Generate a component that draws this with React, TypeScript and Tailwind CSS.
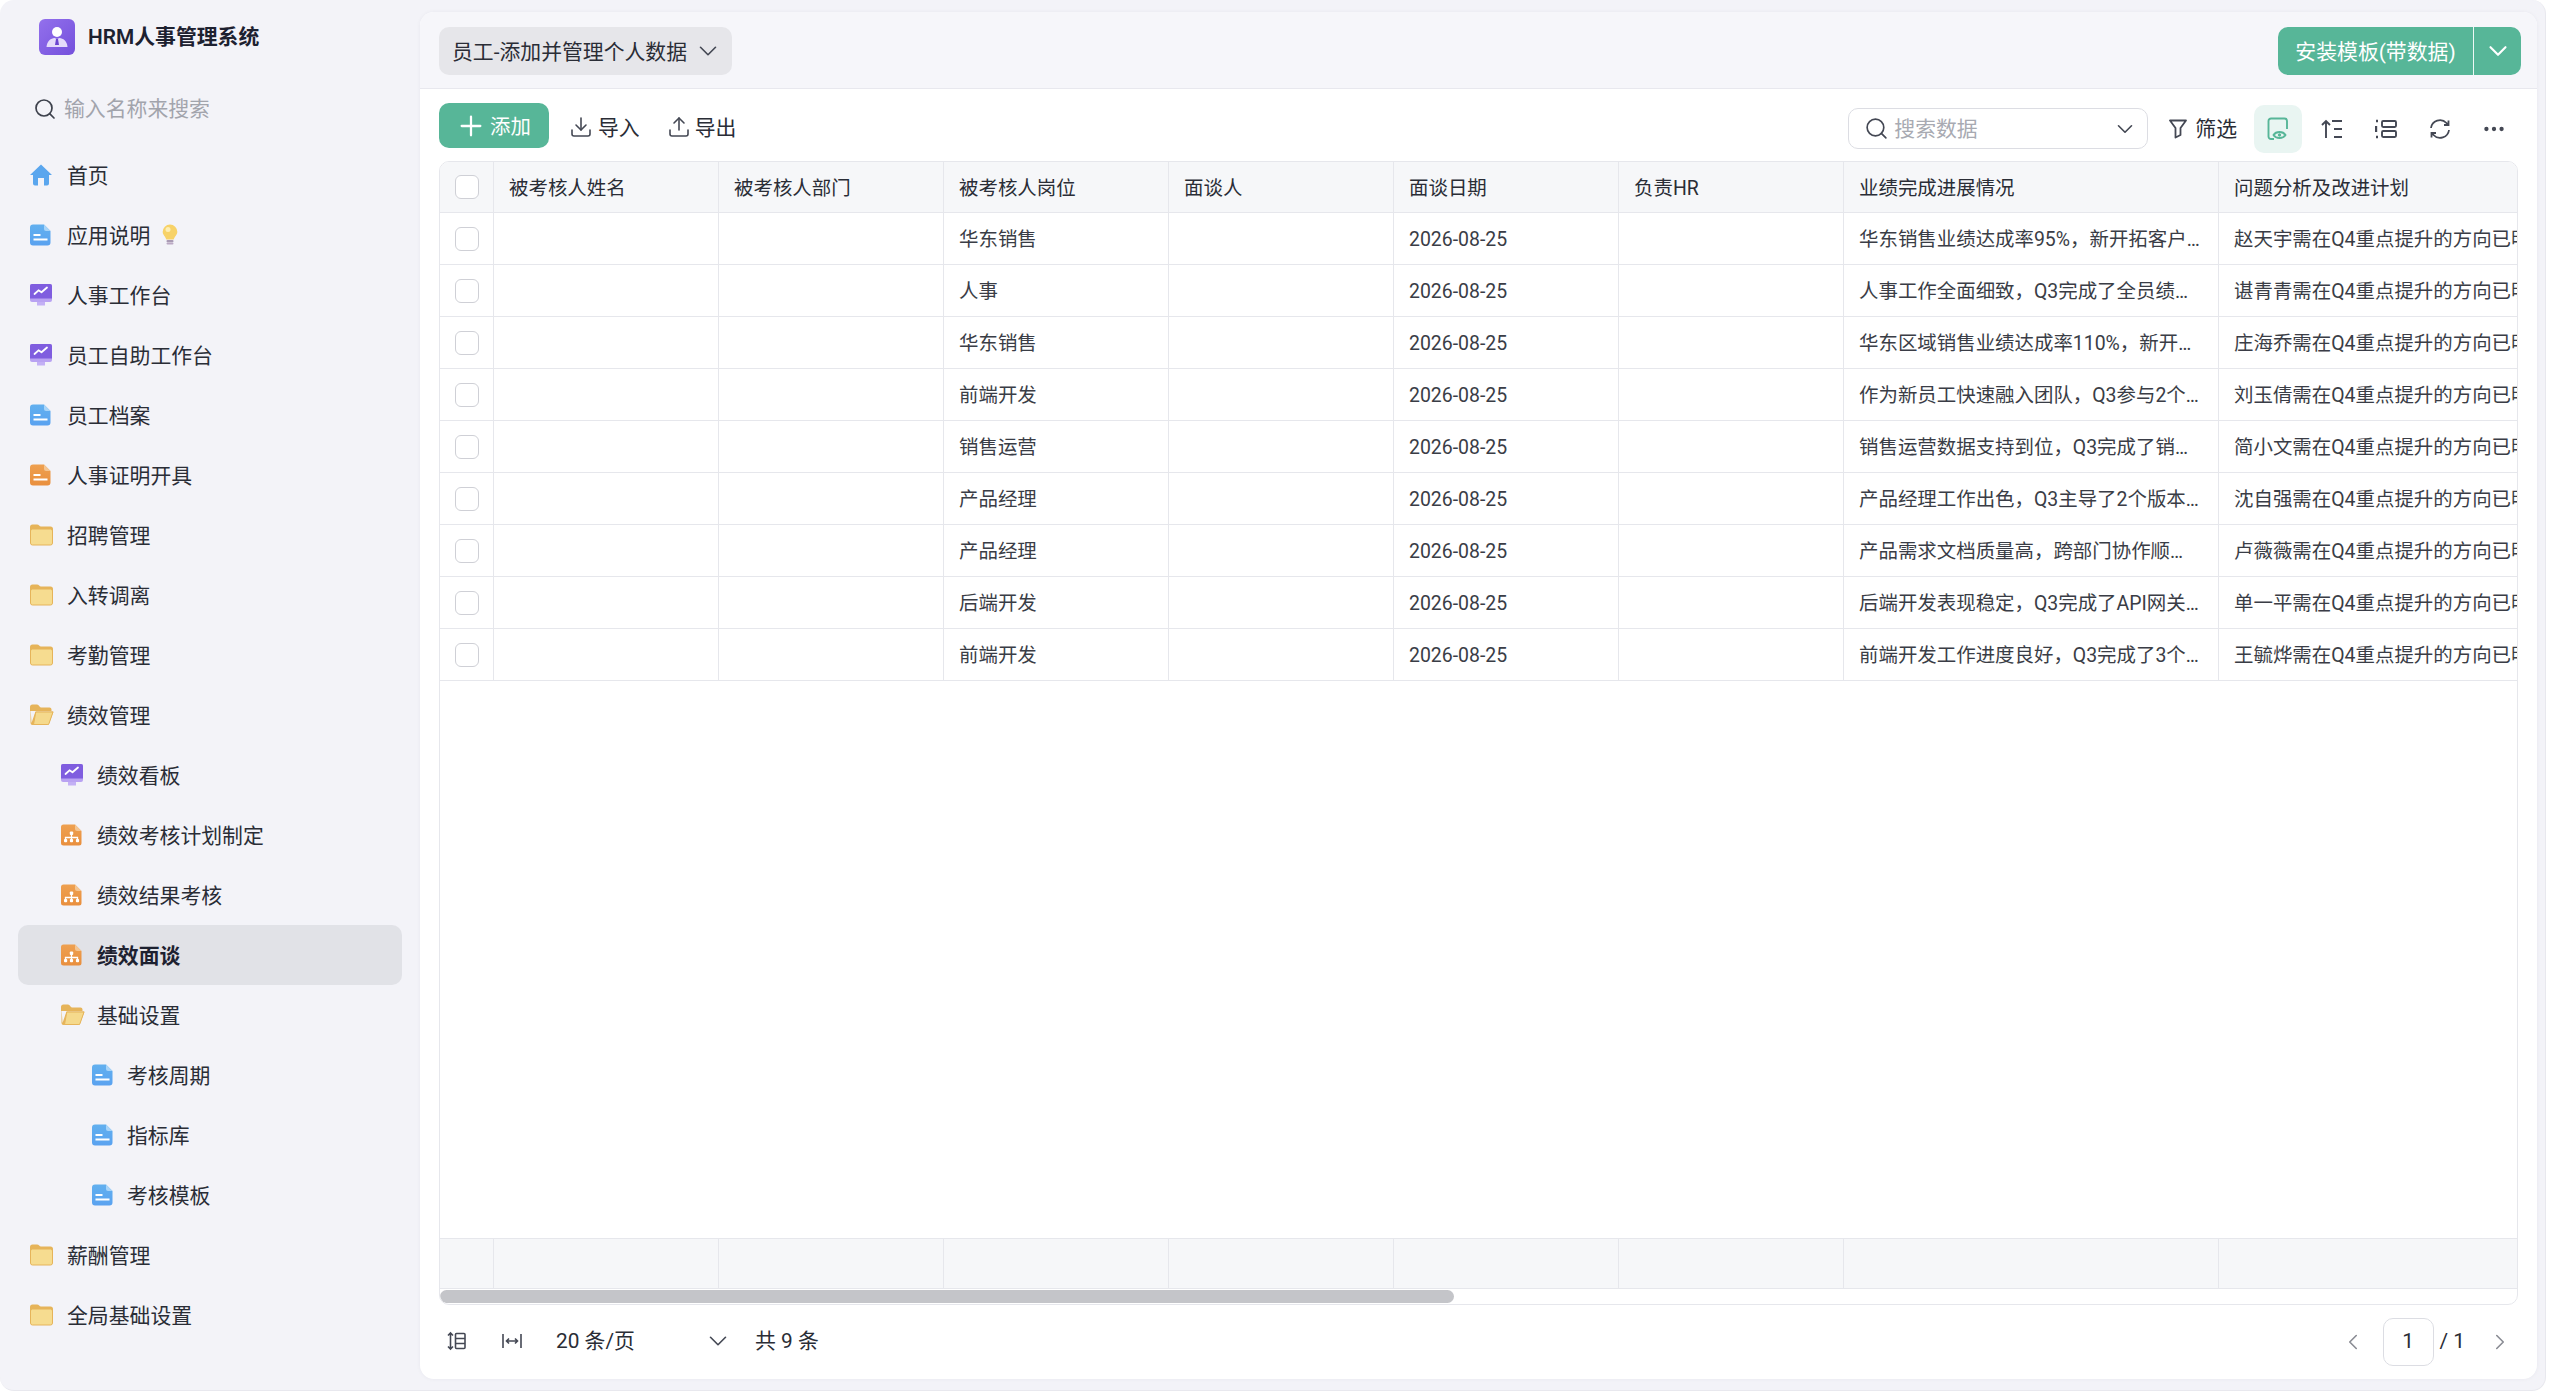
import React from "react";
import { ChevronDown, ChevronLeft, ChevronRight, Download, Ellipsis, Plus, Search, Upload } from "lucide-react";

const DocIcon = ({ orange = false }: { orange?: boolean }) => {
  const id = orange ? "docO" : "docB";
  return (
    <svg width="21" height="22" viewBox="0 0 21 22" className="shrink-0">
      <defs>
        <linearGradient id={id} x1="0" y1="0" x2="0" y2="1">
          <stop offset="0" stopColor={orange ? "#eea050" : "#62b0ef"} />
          <stop offset="1" stopColor={orange ? "#e98f3e" : "#5aa2f0"} />
        </linearGradient>
      </defs>
      <path d="M3 0.5H14L20.5 7V18.5A3 3 0 0 1 17.500 21.500H3A3 3 0 0 1 0 18.500V3.500A3 3 0 0 1 3 0.500Z" fill={`url(#${id})`} />
      <path d="M14 0.500L20.500 7H16A2 2 0 0 1 14 5Z" fill={orange ? "#f4c592" : "#a8d4f8"} />
      <rect x="3.500" y="10" width="7" height="2" fill="#fff" />
      <rect x="3.500" y="14.500" width="14" height="2" fill="#fff" />
    </svg>
  );
};

const OrgIcon = () => (
  <svg width="21" height="22" viewBox="0 0 21 22" className="shrink-0">
    <defs>
      <linearGradient id="orgO" x1="0" y1="0" x2="0" y2="1">
        <stop offset="0" stopColor="#eea050" />
        <stop offset="1" stopColor="#e98f3e" />
      </linearGradient>
    </defs>
    <path d="M2.500 0.500H14L20.500 7V19A2.500 2.500 0 0 1 18 21.500H2.500A2.500 2.500 0 0 1 0 19V3A2.500 2.500 0 0 1 2.500 0.500Z" fill="url(#orgO)" />
    <path d="M14 0.500L20.500 7H16A2 2 0 0 1 14 5Z" fill="#f4c592" />
    <path d="M10.500 10V13.500M4.500 16V13.500H16.500V16M10.500 13.500V16" stroke="#fff" strokeWidth="1.300" fill="none" />
    <rect x="8.800" y="7.500" width="3.400" height="3.400" rx="1" fill="#fff" />
    <rect x="3" y="15" width="3.200" height="3.200" rx="1" fill="#fff" />
    <rect x="8.900" y="15" width="3.200" height="3.200" rx="1" fill="#fff" />
    <rect x="14.900" y="15" width="3.200" height="3.200" rx="1" fill="#fff" />
  </svg>
);

const MonitorIcon = () => (
  <svg width="22" height="22" viewBox="0 0 22 22" className="shrink-0">
    <rect x="0" y="0" width="22" height="18" rx="2" fill="#b9a2f2" />
    <path d="M2 0H20A2 2 0 0 1 22 2V14.500H0V2A2 2 0 0 1 2 0Z" fill="#7f5ddf" />
    <rect x="7" y="18" width="8" height="3.500" fill="#c3b0f5" />
    <path d="M4.500 10L8.500 6.300L11.500 8.300L17 3.500" stroke="#fff" strokeWidth="1.800" fill="none" strokeLinecap="round" strokeLinejoin="round" />
  </svg>
);

const FolderIcon = ({ open = false }: { open?: boolean }) => (
  <svg width="24" height="22" viewBox="0 0 24 22" className="shrink-0">
    {open ? (
      <>
        <path d="M0 3A2.500 2.500 0 0 1 2.500 0.500H7C9 0.500 9.500 3.500 11 3.500H19.500A2 2 0 0 1 21.500 5.500V7H0Z" fill="#e6b45a" />
        <path d="M0.500 3V19A2 2 0 0 0 2.500 21H18.500L23.500 7.500H5.500L1.500 19" fill="#e6b45a" />
        <path d="M5.800 8H23L19 19.500A1.500 1.500 0 0 1 17.500 20.500H3.500Z" fill="#f5d98c" stroke="#e6b45a" strokeWidth="1" />
      </>
    ) : (
      <>
        <path d="M0 3A2.500 2.500 0 0 1 2.500 0.500H7C9 0.500 9.500 2.500 11 2.500H20.500A2.500 2.500 0 0 1 23 5V8H0Z" fill="#e6b45a" />
        <rect x="0.500" y="5" width="22" height="16" rx="2" fill="#f6dc90" stroke="#e6b45a" strokeWidth="1" />
      </>
    )}
  </svg>
);

const HomeIcon = () => (
  <svg width="22" height="22" viewBox="0 0 22 22" className="shrink-0">
    <path d="M11 0.500L22 11H19V19.500A2 2 0 0 1 17 21.500H14V14H8V21.500H5A2 2 0 0 1 3 19.500V11H0Z" fill="#5aa6ee" />
  </svg>
);

const Bulb = () => (
  <svg width="16" height="22" viewBox="0 0 16 22" className="ml-[12px]">
    <path d="M8 0.500A7.300 7.300 0 0 0 0.700 7.800C0.700 11 3.500 12.500 4.300 15.500H11.700C12.500 12.500 15.300 11 15.300 7.800A7.300 7.300 0 0 0 8 0.500Z" fill="#f7d268" />
    <circle cx="6" cy="5.500" r="2.500" fill="#fdeeb4" />
    <rect x="4.500" y="16" width="7" height="2.200" rx="1" fill="#a99ab4" />
    <rect x="4.500" y="18.500" width="7" height="2" rx="1" fill="#bba9c4" />
  </svg>
);

const items: { t: string; i: React.ReactNode; l?: number; bulb?: boolean; active?: boolean }[] = [
  { t: "首页", i: <HomeIcon /> },
  { t: "应用说明", i: <DocIcon />, bulb: true },
  { t: "人事工作台", i: <MonitorIcon /> },
  { t: "员工自助工作台", i: <MonitorIcon /> },
  { t: "员工档案", i: <DocIcon /> },
  { t: "人事证明开具", i: <DocIcon orange /> },
  { t: "招聘管理", i: <FolderIcon /> },
  { t: "入转调离", i: <FolderIcon /> },
  { t: "考勤管理", i: <FolderIcon /> },
  { t: "绩效管理", i: <FolderIcon open /> },
  { t: "绩效看板", i: <MonitorIcon />, l: 1 },
  { t: "绩效考核计划制定", i: <OrgIcon />, l: 1 },
  { t: "绩效结果考核", i: <OrgIcon />, l: 1 },
  { t: "绩效面谈", i: <OrgIcon />, l: 1, active: true },
  { t: "基础设置", i: <FolderIcon open />, l: 1 },
  { t: "考核周期", i: <DocIcon />, l: 2 },
  { t: "指标库", i: <DocIcon />, l: 2 },
  { t: "考核模板", i: <DocIcon />, l: 2 },
  { t: "薪酬管理", i: <FolderIcon /> },
  { t: "全局基础设置", i: <FolderIcon /> },
];

const rows = [
  ["华东销售", "华东销售业绩达成率95%，新开拓客户资源并持续跟进", "赵天宇"],
  ["人事", "人事工作全面细致，Q3完成了全员绩效考核组织工作", "谌青青"],
  ["华东销售", "华东区域销售业绩达成率110%，新开拓重点客户多家", "庄海乔"],
  ["前端开发", "作为新员工快速融入团队，Q3参与2个项目开发任务", "刘玉倩"],
  ["销售运营", "销售运营数据支持到位，Q3完成了销售数据分析工作", "简小文"],
  ["产品经理", "产品经理工作出色，Q3主导了2个版本迭代上线工作", "沈自强"],
  ["产品经理", "产品需求文档质量高，跨部门协作顺畅高效值得肯定", "卢薇薇"],
  ["后端开发", "后端开发表现稳定，Q3完成了API网关重构优化工作", "单一平"],
  ["前端开发", "前端开发工作进度良好，Q3完成了3个核心模块开发", "王毓烨"],
];

const Checkbox = () => <span className="block h-[24px] w-[24px] rounded-[6px] border border-[#cfd0d6] bg-white" />;

const cellBase = "h-full shrink-0 border-r border-[#e6e7ec] flex items-center";
const w1 = "w-[54px] justify-center";
const w2 = "w-[225px] pl-[15px] pr-[16px] pt-[3px]";
const w3 = "w-[375px] pl-[15px] pr-[16px] pt-[3px]";

const icon = "text-[#444854]";

export default function App() {
  return (
    <div className="h-[1391px] w-full overflow-hidden bg-white text-[19.46px] text-[#2a2d36]" style={{ fontFamily: 'Roboto, "Noto Sans CJK SC", sans-serif' }}>
      <div className="flex h-full w-[2546px] rounded-[14px] border-r border-b border-[#e8e8ee] bg-[#f3f3f8] pb-[11px] pr-[8px] pt-[12px]">
        <aside className="flex w-[420px] shrink-0 flex-col -mt-[12px]">
          <div className="flex h-[72px] items-center pl-[39px] pt-[1px]">
            <span className="flex h-[36px] w-[36px] items-center justify-center rounded-[6px] bg-gradient-to-br from-[#9370ec] to-[#7550dc]">
              <svg width="24" height="24" viewBox="0 0 24 24">
                <circle cx="12" cy="7" r="5" fill="#fff" />
                <path d="M1.500 22C2 15.500 6 13.500 9.500 13L12 14L14.500 13C18 13.500 22 15.500 22.500 22Z" fill="#e5dcfa" />
                <path d="M11 14H13L14 20H10Z" fill="#6a45cf" />
              </svg>
            </span>
            <span className="ml-[13px] pt-[3px] text-[20.85px] font-semibold text-[#1d2130]">HRM人事管理系统</span>
          </div>
          <div className="flex h-[73px] items-center pl-[33px]">
            <Search size={24} strokeWidth={1.7} className="text-[#3d414c]" />
            <span className="ml-[7px] pt-[2px] text-[20.85px] text-[#a2a4ac]">输入名称来搜索</span>
          </div>
          <nav className="flex flex-col">
            {items.map((it) => (
              <div key={it.t} className={`mx-[18px] flex h-[60px] items-center rounded-[10px] text-[20.85px] ${it.active ? "bg-[#e1e2e7] font-bold text-[#1d2130]" : ""}`}>
                <span className={`flex items-center ${it.l === 2 ? "ml-[74px] w-[35px]" : it.l === 1 ? "ml-[43px] w-[36px]" : "ml-[12px] w-[37px]"}`}>{it.i}</span>
                <span className="pt-[3px]">{it.t}</span>
                {it.bulb && <Bulb />}
              </div>
            ))}
          </nav>
        </aside>

        <main className="flex min-w-0 flex-1 flex-col overflow-hidden rounded-[14px] bg-white shadow-[0_0_4px_rgba(40,40,80,0.05)]">
          <header className="flex h-[77px] shrink-0 items-center justify-between border-b border-[#e8e8ee] bg-[#f6f6fa] pl-[19px] pr-[16px] pt-[2px]">
            <div className="flex h-[48px] w-[293px] items-center rounded-[10px] bg-[#e6e6ea] pl-[13px] text-[20.85px]">
              <span className="pt-[3px]">员工-添加并管理个人数据</span>
              <ChevronDown size={30} strokeWidth={1.3} className="ml-[6px] text-[#444854]" />
            </div>
            <div className="flex h-[48px] w-[243px] items-center rounded-[10px] bg-[#57b698] text-[20.85px] text-white">
              <span className="flex h-full w-[196px] items-center justify-center border-r border-white/90 pt-[3px]">安装模板(带数据)</span>
              <span className="flex flex-1 items-center justify-center">
                <ChevronDown size={30} strokeWidth={1.7} />
              </span>
            </div>
          </header>

          <div className="flex min-h-0 flex-1 flex-col px-[19px]">
            <div className="flex h-[72px] shrink-0 items-start justify-between">
              <div className="flex items-center pt-[14px]">
                <div className="flex h-[45px] w-[110px] items-center justify-center rounded-[10px] bg-[#57b698] text-[20.4px] text-white">
                  <Plus size={32} strokeWidth={1.7} className="-ml-[2px] mr-[3px]" />
                  <span className="pt-[3px]">添加</span>
                </div>
                <div className="ml-[20px] flex items-center pt-[4px] text-[20.85px]">
                  <Download size={24} strokeWidth={1.6} className={icon} />
                  <span className="ml-[5px] pt-[3px]">导入</span>
                </div>
                <div className="ml-[27px] flex items-center pt-[4px] text-[20.85px]">
                  <Upload size={24} strokeWidth={1.6} className={icon} />
                  <span className="ml-[4px] pt-[3px]">导出</span>
                </div>
              </div>
              <div className="flex items-center pr-[11px] pt-[19px]">
                <div className="flex h-[41px] w-[300px] items-center rounded-[10px] border border-[#dcdde3] pl-[15px] pr-[9px]">
                  <Search size={25} strokeWidth={1.6} className="text-[#444854]" />
                  <span className="ml-[5px] flex-1 pt-[3px] text-[20.85px] text-[#a8aab2]">搜索数据</span>
                  <ChevronDown size={26} strokeWidth={1.5} className="text-[#444854]" />
                </div>
                <svg width="18" height="20" viewBox="0 0 18 20" fill="none" stroke="#444854" strokeWidth="1.800" strokeLinejoin="round" className="ml-[21px]">
                  <path d="M1 1.500H17L11.500 9V16L6.500 18.500V9Z" />
                </svg>
                <span className="ml-[8px] pt-[3px] text-[20.85px]">筛选</span>
                <div className="-my-[4px] ml-[17px] flex h-[48px] w-[48px] items-center justify-center rounded-[10px] bg-[#e9f5f2]">
                  <svg width="22" height="24" viewBox="0 0 22 24" fill="none" stroke="#57b698" strokeWidth="1.900">
                    <path d="M7 22H4A2.500 2.500 0 0 1 1.500 19.500V4A2.500 2.500 0 0 1 4 1.500H17.500A2.500 2.500 0 0 1 20 4V12" />
                    <path d="M6.500 18C9 14 16 14 18.500 18C16 22 9 22 6.500 18Z" fill="#e9f5f2" />
                    <circle cx="12.500" cy="18" r="1.200" fill="#57b698" strokeWidth="1" />
                  </svg>
                </div>
                <svg width="22" height="22" viewBox="0 0 22 22" fill="none" stroke="#444854" strokeWidth="1.900" className="ml-[19px]">
                  <path d="M5 20V3M1 7L5 3L9 7M11 3H21M13 11H21M13 19H21" />
                </svg>
                <svg width="22" height="22" viewBox="0 0 22 22" fill="none" stroke="#444854" strokeWidth="1.900" className="ml-[32px]">
                  <rect x="7" y="3" width="14" height="6" rx="1.200" />
                  <rect x="7" y="13" width="14" height="6" rx="1.200" />
                  <path d="M1 3H3M1 8V14M1 19H3" strokeWidth="2.400" />
                </svg>
                <svg width="22" height="22" viewBox="0 0 22 22" fill="none" stroke="#444854" strokeWidth="1.800" className="ml-[32px]">
                  <path d="M2 10A9 9 0 0 1 17.500 5L19 6.500M20 12A9 9 0 0 1 4.500 17L3 15.500" />
                  <path d="M19.500 2.500V7H15M2.500 19.500V15H7" />
                </svg>
                <Ellipsis size={26} strokeWidth={2} className="ml-[30px] text-[#444854]" />
              </div>
            </div>

            <div className="flex min-h-0 flex-1 flex-col overflow-hidden rounded-[10px] border border-[#e6e7ec]">
              <div className="flex h-[51px] shrink-0 border-b border-[#e6e7ec] bg-[#f6f7f9]">
                <div className={`${cellBase} ${w1}`}><Checkbox /></div>
                {["被考核人姓名", "被考核人部门", "被考核人岗位", "面谈人", "面谈日期", "负责HR"].map((h) => (
                  <div key={h} className={`${cellBase} ${w2}`}>{h}</div>
                ))}
                <div className={`${cellBase} ${w3}`}>业绩完成进展情况</div>
                <div className={`${cellBase} ${w3}`}>问题分析及改进计划</div>
              </div>
              {rows.map((r) => (
                <div key={r[2]} className="flex h-[52px] shrink-0 border-b border-[#e6e7ec] text-[#3a3d46]">
                  <div className={`${cellBase} ${w1}`}><Checkbox /></div>
                  <div className={`${cellBase} ${w2}`} />
                  <div className={`${cellBase} ${w2}`} />
                  <div className={`${cellBase} ${w2}`}>{r[0]}</div>
                  <div className={`${cellBase} ${w2}`} />
                  <div className={`${cellBase} ${w2}`}>2026-08-25</div>
                  <div className={`${cellBase} ${w2}`} />
                  <div className={`${cellBase} ${w3}`}><span className="truncate">{r[1]}</span></div>
                  <div className={`${cellBase} ${w3} overflow-hidden`}><span className="whitespace-nowrap">{r[2]}需在Q4重点提升的方向已明确并制定计划</span></div>
                </div>
              ))}
              <div className="flex-1" />
              <div className="flex h-[51px] shrink-0 border-y border-[#e6e7ec] bg-[#f6f7f9]">
                <div className={`${cellBase} ${w1}`} />
                {[1, 2, 3, 4, 5, 6].map((n) => (
                  <div key={n} className={`${cellBase} ${w2}`} />
                ))}
                <div className={`${cellBase} ${w3}`} />
              </div>
              <div className="h-[15px] shrink-0 pt-[1px]">
                <div className="h-[13px] w-[1014px] rounded-full bg-[#c4c5c9]" />
              </div>
            </div>

            <div className="flex h-[74px] shrink-0 items-center justify-between pb-[1px] text-[20.85px]">
              <div className="flex items-center">
                <svg width="20" height="20" viewBox="0 0 20 20" fill="none" stroke="#444854" strokeWidth="1.600" className="ml-[8px]">
                  <path d="M3.500 2V18M1 4.500L3.500 2L6 4.500M1 15.500L3.500 18L6 15.500" />
                  <rect x="8.500" y="2.500" width="9.500" height="15" rx="1" />
                  <path d="M8.500 7.500H18M8.500 12.500H18" />
                </svg>
                <svg width="20" height="20" viewBox="0 0 20 20" fill="none" stroke="#444854" strokeWidth="1.600" className="ml-[35px]">
                  <path d="M1 3V17M19 3V17M4.500 10H15.500M7 7.500L4.500 10L7 12.500M13 7.500L15.500 10L13 12.500" />
                </svg>
                <span className="ml-[34px] w-[147px]">20 条/页</span>
                <ChevronDown size={30} strokeWidth={1.3} className="text-[#444854]" />
                <span className="ml-[22px]">共 9 条</span>
              </div>
              <div className="flex items-center pr-[5px]">
                <ChevronLeft size={26} strokeWidth={1.5} className="text-[#8a8c94]" />
                <span className="ml-[17px] flex h-[48px] w-[51px] items-center justify-center rounded-[10px] border border-[#dcdde3]">1</span>
                <span className="ml-[6px]">/ 1</span>
                <ChevronRight size={26} strokeWidth={1.5} className="ml-[22px] text-[#8a8c94]" />
              </div>
            </div>
          </div>
        </main>
      </div>
    </div>
  );
}
